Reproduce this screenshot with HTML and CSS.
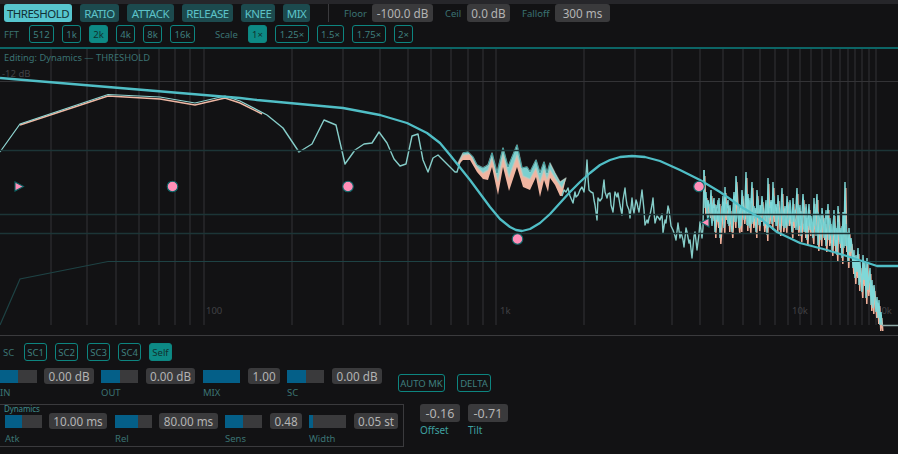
FILE: index.html
```html
<!DOCTYPE html>
<html lang="en">
<head>
<meta charset="utf-8">
<title>Dynamics</title>
<link rel="stylesheet" href="styles.css">
</head>
<body>
<div class="app">
  <header class="top">
    <div class="row">
      <button class="tab on w68">THRESHOLD</button>
      <button class="tab w39">RATIO</button>
      <button class="tab w47">ATTACK</button>
      <button class="tab w51">RELEASE</button>
      <button class="tab w34">KNEE</button>
      <button class="tab w27">MIX</button>
      <span class="divider"></span>
      <span class="lbl floor">Floor</span><span class="val w61">-100.0 dB</span>
      <span class="lbl ceil">Ceil</span><span class="val w43">0.0 dB</span>
      <span class="lbl falloff">Falloff</span><span class="val w55">300 ms</span>
    </div>
    <div class="row row2">
      <span class="lbl fft">FFT</span>
      <button class="opt w25">512</button>
      <button class="opt w19">1k</button>
      <button class="opt sel w19">2k</button>
      <button class="opt w19">4k</button>
      <button class="opt w19">8k</button>
      <button class="opt w25">16k</button>
      <span class="lbl scale">Scale</span>
      <button class="opt sel w19">1×</button>
      <button class="opt w34">1.25×</button>
      <button class="opt w27">1.5×</button>
      <button class="opt w34">1.75×</button>
      <button class="opt w19">2×</button>
    </div>
  </header>

  <main class="plot">
    <svg class="graph" viewBox="0 49 898 286" width="898" height="286" aria-label="Spectrum display">
      <defs>
        <polyline id="dense" points="704,170 705,208 706,192 707,214 708,200 710,212 711,190 712,215 714,198 715,232 716,205 718,222 719,198 720,238 722,210 723,196 724,228 725,187 726,214 728,200 729,226 730,205 732,232 733,210 734,192 735,222 736,176 738,215 739,228 740,205 741,226 742,190 744,218 745,205 746,172 747,225 748,194 750,228 751,205 752,182 753,222 755,208 756,232 757,190 759,225 760,205 761,216 762,196 764,226 766,204 767,235 768,178 769,218 771,200 772,224 773,182 774,216 776,204 777,226 778,195 780,230 781,210 782,188 783,226 785,206 786,228 787,196 789,220 790,208 792,232 793,198 794,222 796,208 797,188 798,230 800,205 801,236 802,214 803,194 805,232 806,212 807,240 809,204 810,230 811,216 813,238 814,198 815,226 817,194 818,245 820,214 821,240 822,208 824,234 825,218 826,246 828,204 829,240 831,224 832,250 834,210 835,246 836,228 837,255 838,206 840,242 841,228 842,258 843,212 844,240 845,182 846,246 847,232 848,262 849,228 850,252 851,238 852,247 853,268 854,250 855,278 856,255 857,272 858,248 859,285 860,262 862,292 863,255 864,280 865,262 866,298 867,258 868,290 870,268 871,305 872,280 873,308 874,285 875,298 876,312 877,297 878,318 879,300 880,325 881,312 882,325"/>
      </defs>
      <path class="vgrid" d="M51 49V325M87 49V325M116 49V325M139 49V325M159 49V325M175 49V325M190 49V325M204 49V325M292 49V325M343 49V325M380 49V325M408 49V325M431 49V325M451 49V325M468 49V325M483 49V325M496 49V325M584 49V325M635 49V325M672 49V325M700 49V325M723 49V325M743 49V325M760 49V325M775 49V325M788 49V325M800 49V325M811 49V325M822 49V325M831 49V325M840 49V325M848 49V325M855 49V325M862 49V325M869 49V325M876 49V325"/>
      <path class="hgray" d="M0 81.500H898"/>
      <text class="editing" x="4" y="61">Editing: Dynamics — THRESHOLD</text>
      <text class="axis" x="2" y="77">-12 dB</text>
      <text class="axis" x="206" y="314">100</text>
      <text class="axis" x="500" y="314">1k</text>
      <text class="axis" x="792" y="314">10k</text>
      <text class="axis" x="876" y="314">20k</text>

      <polyline class="lowsalmon" points="20,125 108,96 160,99 195,105 225,98 240,103 262,114"/>
      <polyline class="lowteal" points="0,152 20,124 108,94.500 160,97 195,103 225,96 240,101 267,115"/>
      <polyline class="trace" points="267,115 283,128 299,152 312,144 324,120 336,125 345,164 355,150 364,144 372,143 379,132 387,143 394,159 400,166 406,164 412,136 418,134 423,160 428,172 433,158 438,155 445,162 455,172 457,172 460,162 463,155"/>
      <polygon class="bandsalmon" points="458,163 463,153 468,152 473,157 477,165 483,168 488,165 492,153 497,173 503,148 508,167 517,145 522,168 527,167 530,172 536,160 540,173 544,162 547,173 550,163 555,173 560,182 566,178 562,196 560,196 555,185 550,178 548,192 544,180 540,197 536,177 530,190 523,187 517,167 509,191 503,167 498,195 492,167 488,180 483,179 477,172 470,160 463,160 458,165"/>
      <polygon class="bandteal" points="458,163 463,153 468,152 473,157 477,165 483,168 488,165 492,153 497,173 503,148 508,167 517,145 522,168 527,167 530,172 536,160 540,173 544,162 547,173 550,163 555,173 560,182 566,178 562,188 555,178 550,170 547,179 544,170 540,182 536,168 530,179 523,176 517,155 509,177 503,155 498,181 492,158 488,170 483,173 477,167 470,154 463,155"/>
      <polyline class="bandtop" points="463,153 468,152 473,157 477,165 483,168 488,165 492,153 497,173 503,148 508,167 517,145 522,168 527,167 530,172 536,160 540,173 544,162 547,173 550,163"/>
      <polyline class="trace" points="562,196 564,190 566,192 568,188 570,196 573,203 575,192 576,197 578,195 580,190 582,187 584,192 586,175 587,160 588,178 589,190 591,192 593,193 594,200 595,205 597,220 598,198 600,201 602,198 603,188 604,180 605,192 607,198 608,194 610,193 611,205 613,212 615,192 617,197 618,193 620,205 622,215 623,200 625,188 626,198 627,205 629,210 630,218 632,198 633,208 634,213 636,200 637,203 638,208 639,212 641,198 642,190 644,210 645,225 647,220 648,223 649,218 650,215 652,205 653,198 654,212 655,223 657,216 658,217 660,220 662,214 663,233 665,220 666,223 668,206 669,210 671,226 673,230 675,236 676,240 678,223 680,238 681,232 683,240 684,247 686,228 687,232 689,243 690,240 692,258 694,236 695,232 697,250 699,234 700,222 702,238 703,228 704,170"/>
      <use class="densesalmon" href="#dense" x="0.800" y="6"/>
      <use class="denseteal" href="#dense"/>
      <polyline class="densebody" points="706,200 708,222 710,204 712,226 714,208 716,220 718,200 720,228 722,206 724,222 726,204 728,224 730,210 732,226 734,202 736,222 738,206 740,228 742,204 744,220 746,208 748,226 750,198 752,224 754,206 756,222 758,200 760,226 762,206 764,220 766,200 768,228 770,208 772,222 774,196 776,226 778,206 780,224 782,202 784,228 786,208 788,226 790,200 792,222 794,210 796,230 798,204 800,226 802,212 804,232 806,204 808,226 810,214 812,232 814,208 816,236 818,212 820,230 822,216 824,238 826,210 828,234 830,218 832,240 834,214 836,240 838,222 840,244 842,226 844,248 846,224 848,252"/>
      <path class="hteal" d="M0 150.500H898M0 214.500H898M0 233.500H898"/>
      <polyline class="dim" points="0,325 20,279 108,261.500 898,261.500"/>
      <path class="floorline" d="M882 325.500H898"/>
      <polyline class="curve" points="0,78 120,88 240,98 257,100 300,104 343,108 380,115 407,123 427,133 440,143 450,155 470,180 490,207 500,219 510,227 516,230 522,231 530,229 540,223 550,214 560,203 570,192 580,182 590,173 600,165 610,160 620,157 632,156 645,157 660,161 680,170 700,180 720,192 743,208 760,218 777,232 800,243 827,250 850,257 865,262 877,266 898,266"/>
      <circle class="pin" cx="172.500" cy="186.500" r="5.300"/>
      <circle class="pin" cx="348" cy="186.500" r="5.300"/>
      <circle class="pin" cx="517.500" cy="239" r="5.300"/>
      <circle class="pin" cx="699" cy="186.500" r="5.300"/>
      <polygon class="pin" points="15,182 15,191 23.500,186.500"/>
      <polygon class="pin" points="709,218 709,227 701,222.500"/>
    </svg>
  </main>

  <section class="bottom">
    <div class="row scrow">
      <span class="lbl sc">SC</span>
      <button class="opt w23">SC1</button>
      <button class="opt w23">SC2</button>
      <button class="opt w23 sc3">SC3</button>
      <button class="opt w23">SC4</button>
      <button class="opt sel w23">Self</button>
    </div>
    <div class="row strips">
      <div class="strip g7"><div class="slider"><i class="fill f18"></i></div><span class="val w50">0.00 dB</span><span class="lbl cap">IN</span></div>
      <div class="strip g8"><div class="slider"><i class="fill f19"></i></div><span class="val w49">0.00 dB</span><span class="lbl cap">OUT</span></div>
      <div class="strip g8"><div class="slider"><i class="fill f37"></i></div><span class="val w32">1.00</span><span class="lbl cap">MIX</span></div>
      <div class="strip g8"><div class="slider"><i class="fill f19"></i></div><span class="val w50">0.00 dB</span><span class="lbl cap">SC</span></div>
      <button class="opt mk w47">AUTO MK</button>
      <button class="opt delta w34">DELTA</button>
    </div>
    <div class="row lower">
      <fieldset class="dyn">
        <legend class="dynhead">Dynamics</legend>
        <div class="dynrow">
          <div class="strip g7 s1"><div class="slider"><i class="fill f17"></i></div><span class="val w58">10.00 ms</span><span class="lbl cap">Atk</span></div>
          <div class="strip g7 s2"><div class="slider"><i class="fill f23"></i></div><span class="val w59">80.00 ms</span><span class="lbl cap">Rel</span></div>
          <div class="strip g8 s3"><div class="slider"><i class="fill f18"></i></div><span class="val w32">0.48</span><span class="lbl cap">Sens</span></div>
          <div class="strip g8"><div class="slider"><i class="fill f4"></i></div><span class="val w44">0.05 st</span><span class="lbl cap">Width</span></div>
        </div>
      </fieldset>
      <div class="pair"><span class="val big">-0.16</span><span class="lbl hi">Offset</span></div>
      <div class="pair"><span class="val big">-0.71</span><span class="lbl hi">Tilt</span></div>
    </div>
  </section>
</div>
</body>
</html>
```
FILE: styles.css
```css
* { box-sizing: border-box; }
html, body { margin: 0; padding: 0; background: #121214; }
.app {
  width: 898px; height: 454px; overflow: hidden;
  background: #121214;
  border-top: 4px solid #26262a;
  font-family: "Noto Sans", "Open Sans", sans-serif;
  font-size: 11px;
  color: #bdbdbd;
}
button { font: inherit; margin: 0; padding: 0; white-space: nowrap; }
.top { padding-left: 4px; height: 43px; }
.row { display: flex; align-items: center; }
.top .row { height: 18px; gap: 8px; }
.top .row2 { margin-top: 3px; }

.tab {
  height: 18px; border: 0; border-radius: 3px;
  background: #1c4a4e; color: #5cc2c8; font-size: 11.500px; letter-spacing: -0.500px;
}
.tab.on { background: #57c6cf; color: #123035; }
.w19 { width: 19px; } .w23 { width: 23px; } .w25 { width: 25px; } .w27 { width: 27px; }
.w32 { width: 32px; } .w34 { width: 34px; } .w39 { width: 39px; } .w43 { width: 43px; }
.w44 { width: 44px; } .w47 { width: 47px; } .w49 { width: 49px; } .w50 { width: 50px; }
.w51 { width: 51px; } .w55 { width: 55px; } .w58 { width: 58px; } .w59 { width: 59px; }
.w61 { width: 61px; } .w68 { width: 68px; }

.divider { width: 1px; height: 18px; background: #3a3a3d; margin: 0 7px 0 10px; }
.lbl { font-size: 9.500px; color: #3b7273; white-space: nowrap; }
.floor { width: 20px; }
.ceil { width: 14px; margin-left: 4px; }
.falloff { width: 25px; margin-left: 4px; }
.fft { width: 17px; }
.scale { width: 23px; margin: 0 2px 0 12px; }

.val {
  display: flex; align-items: center; justify-content: center;
  height: 16px; border-radius: 3px;
  background: #3a3a3c; color: #b4b4b4;
  font-size: 11.700px; white-space: nowrap;
}
.top .val { height: 18px; }
.opt {
  height: 18px; border: 1px solid #0d8580; border-radius: 3px;
  background: transparent; color: #3f7f7e; font-size: 9.500px;
}
.opt.sel { background: #0d8a85; color: #10322f; }

.plot {
  height: 289px;
  border-top: 2px solid #0c6566;
  border-bottom: 1px solid #3a3a3d;
}
.graph { display: block; }
.graph text { font-family: "Noto Sans", sans-serif; }
.editing { font-size: 9.300px; fill: #3b7273; }
.axis { font-size: 9.500px; fill: #414144; }
.vgrid, .hgray { fill: none; stroke: #333336; stroke-width: 1; }
.hteal { fill: none; stroke: #1c3537; stroke-width: 1.300; }
.dim { fill: none; stroke: #1e4244; stroke-width: 1.200; }
.floorline { fill: none; stroke: #8fa9a7; stroke-width: 1.500; }
.curve { fill: none; stroke: #50bec6; stroke-width: 2.300; stroke-linejoin: round; }
.trace { fill: none; stroke: #86cdc9; stroke-width: 1.400; stroke-linejoin: round; }
.lowsalmon { fill: none; stroke: #f0b8a4; stroke-width: 1.500; }
.lowteal { fill: none; stroke: #8fd5d2; stroke-width: 1.200; }
.bandsalmon { fill: #f0b5a1; }
.bandteal { fill: #7cd0cf; stroke: rgba(190, 205, 195, 0.6); stroke-width: 1.500; stroke-linejoin: round; }
.bandtop { fill: none; stroke: #3c9a9c; stroke-width: 1; }
.densesalmon { fill: none; stroke: #f0b09a; stroke-width: 1.500; }
.densebody { fill: none; stroke: #72cccc; stroke-width: 1.300; }
.denseteal { fill: none; stroke: #7fd8d8; stroke-width: 1.400; }
.pin { fill: #ff8fb8; stroke: #0c6566; stroke-width: 1.100; }

.bottom { padding-top: 7px; }
.scrow { height: 18px; }
.scrow .opt { margin-right: 8px; }
.scrow .sc3 { margin-left: 1px; }
.sc { width: 24px; padding-left: 3px; }
.strips { margin-top: 7px; height: 36px; align-items: flex-start; }
.strip {
  display: grid; grid-template-columns: 37px auto;
  align-items: center;
}
.strips .strip { margin-right: 7px; }
.strips .strip:nth-child(2) { margin-right: 8px; }
.strips .strip:nth-child(4) { margin-right: 16px; }
.g7 { column-gap: 7px; } .g8 { column-gap: 8px; }
.slider { height: 13px; background: #3a3a3c; }
.fill { display: block; height: 13px; background: #045f88; }
.f4 { width: 4px; } .f17 { width: 17px; } .f18 { width: 18px; } .f19 { width: 19px; }
.f23 { width: 23px; } .f37 { width: 37px; }
.cap { grid-column: 1 / -1; line-height: 12px; margin-top: 3px; }
.mk { margin-top: 6px; margin-right: 12px; }
.delta { margin-top: 6px; }

.lower { align-items: flex-start; }
.dyn {
  width: 404px; height: 43px; margin: 0 16px 0 0; padding: 0 0 0 5px;
  border: 1px solid #3a3a3d; border-left: 0;
}
.dynhead {
  padding: 0; margin: 0 0 0 -1px; float: left; width: 100%;
  font-size: 8px; letter-spacing: -0.100px; line-height: 8px; color: #3f8c8c;
}
.dynrow { display: flex; clear: both; }
.dyn .cap { margin-top: 4px; }
.s1 { margin-right: 8px; }
.s2 { margin-right: 7px; }
.s3 { margin-right: 7px; }
.pair { display: flex; flex-direction: column; margin-right: 8px; }
.big { width: 40px; height: 18px; font-size: 12.500px; }
.hi { color: #3fa0a0; margin-top: 2px; line-height: 12px; font-size: 10px; }
```
